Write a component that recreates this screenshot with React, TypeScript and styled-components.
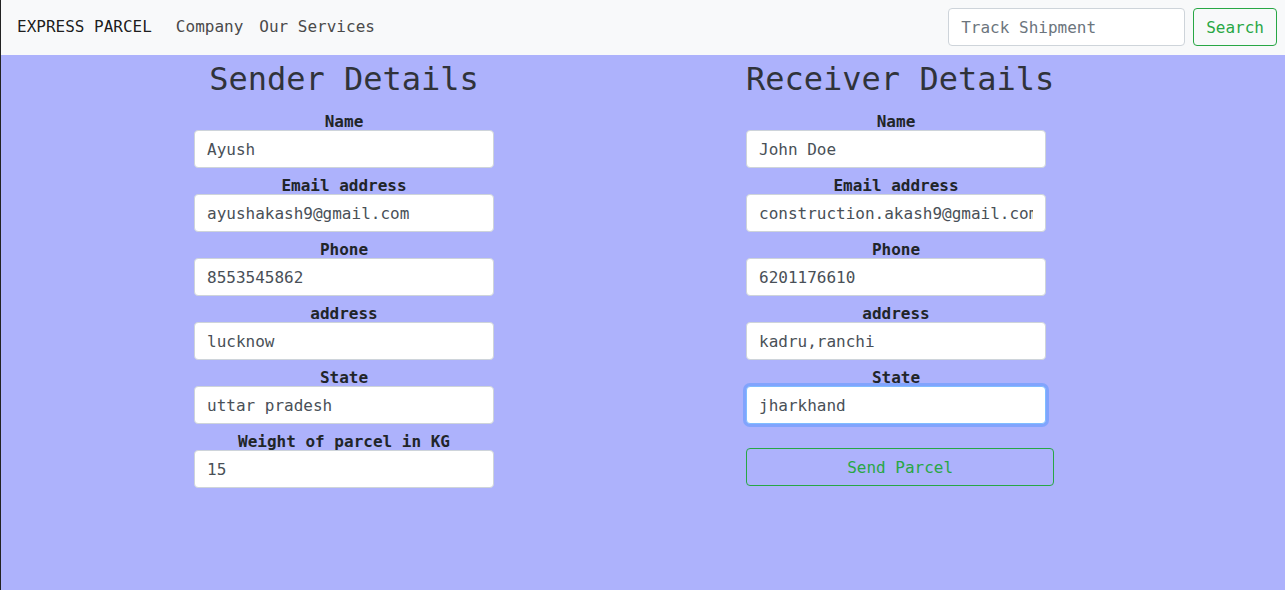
import React from "react";
import styled, { createGlobalStyle, css } from "styled-components";

const GlobalStyle = createGlobalStyle`
  html, body { margin: 0; padding: 0; }
  body {
    font-family: "DejaVu Sans Mono", "Liberation Mono", monospace;
    font-size: 16px;
    color: #212529;
    border-left: 1px solid #222;
    background: #adb2fc;
  }
  * { box-sizing: border-box; }
`;

const Page = styled.div`
  min-height: 100vh;
  display: flex;
  flex-direction: column;
`;

const NavBar = styled.nav`
  height: 55px;
  background: #f8f9fa;
  display: flex;
  align-items: flex-start;
  padding: 8px 8px 0 16px;
`;

const Brand = styled.a`
  font-size: 16px;
  line-height: 38px;
  color: rgba(0, 0, 0, 0.9);
  margin-right: 16px;
  text-decoration: none;
`;

const NavLinks = styled.div`
  display: flex;
  flex: 1;
`;

const NavLink = styled.a`
  padding: 0 8px;
  line-height: 38px;
  color: #4a4a4a;
  text-decoration: none;
  font-size: 16px;
`;

const SearchForm = styled.form`
  display: flex;
  align-items: center;
  gap: 8px;
`;

const baseInput = css`
  height: 38px;
  padding: 6px 12px;
  font-family: inherit;
  font-size: 16px;
  color: #495057;
  background: #fff;
  border: 1px solid #ced4da;
  border-radius: 4px;
  outline: none;
  &::placeholder { color: #6c757d; }
`;

const SearchInput = styled.input`
  ${baseInput};
  width: 237px;
`;

const OutlineButton = styled.button<{ $block?: boolean }>`
  height: 38px;
  padding: 6px 12px;
  font-family: inherit;
  font-size: 16px;
  color: #28a745;
  background: transparent;
  border: 1px solid #28a745;
  border-radius: 4px;
  width: ${(p) => (p.$block ? "100%" : "auto")};
`;

const Main = styled.main`
  flex: 1;
  background: #adb2fc;
  display: flex;
  align-items: flex-start;
  padding: 5px 0 0 193px;
  gap: 252px;
`;

const Form = styled.form`
  display: flex;
  flex-direction: column;
  align-items: flex-start;
`;

const Heading = styled.h1`
  margin: 0 0 6px;
  align-self: stretch;
  text-align: center;
  font-size: 32px;
  font-weight: 400;
  line-height: 38px;
  color: #30333a;
  white-space: nowrap;
`;

const Group = styled.div`
  width: 300px;
  padding-top: 10px;
  display: flex;
  flex-direction: column;
  align-items: center;
`;

const Label = styled.label`
  font-size: 16px;
  line-height: 16px;
  font-weight: 600;
  color: #212529;
  white-space: nowrap;
`;

const Field = styled.input<{ $focused?: boolean }>`
  ${baseInput};
  width: 300px;
  ${(p) =>
    p.$focused &&
    css`
      border-color: #80bdff;
      box-shadow: 0 0 0 3px rgba(0, 123, 255, 0.25);
    `}
`;

const SubmitRow = styled.div`
  align-self: stretch;
  margin-top: 24px;
`;

type FieldDef = { label: string; value: string; focused?: boolean };

const sender: FieldDef[] = [
  { label: "Name", value: "Ayush" },
  { label: "Email address", value: "ayushakash9@gmail.com" },
  { label: "Phone", value: "8553545862" },
  { label: "address", value: "lucknow" },
  { label: "State", value: "uttar pradesh" },
  { label: "Weight of parcel in KG", value: "15" },
];

const receiver: FieldDef[] = [
  { label: "Name", value: "John Doe" },
  { label: "Email address", value: "construction.akash9@gmail.com" },
  { label: "Phone", value: "6201176610" },
  { label: "address", value: "kadru,ranchi" },
  { label: "State", value: "jharkhand", focused: true },
];

const Fields = ({ items }: { items: FieldDef[] }) => (
  <>
    {items.map((f) => (
      <Group key={f.label}>
        <Label>{f.label}</Label>
        <Field defaultValue={f.value} $focused={f.focused} />
      </Group>
    ))}
  </>
);

export default function App() {
  return (
    <Page>
      <GlobalStyle />
      <NavBar>
        <Brand href="#">EXPRESS PARCEL</Brand>
        <NavLinks>
          <NavLink href="#">Company</NavLink>
          <NavLink href="#">Our Services</NavLink>
        </NavLinks>
        <SearchForm onSubmit={(e) => e.preventDefault()}>
          <SearchInput placeholder="Track Shipment" />
          <OutlineButton type="button">Search</OutlineButton>
        </SearchForm>
      </NavBar>
      <Main>
        <Form onSubmit={(e) => e.preventDefault()}>
          <Heading>Sender Details</Heading>
          <Fields items={sender} />
        </Form>
        <Form onSubmit={(e) => e.preventDefault()}>
          <Heading>Receiver Details</Heading>
          <Fields items={receiver} />
          <SubmitRow>
            <OutlineButton type="button" $block>
              Send Parcel
            </OutlineButton>
          </SubmitRow>
        </Form>
      </Main>
    </Page>
  );
}
